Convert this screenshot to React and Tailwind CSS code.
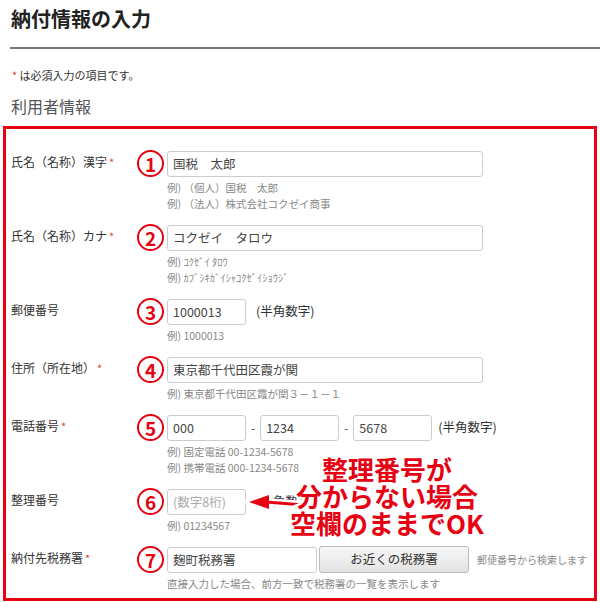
import React from 'react';

const RED = 'text-[#e60012]';

const Num = ({ n }) => (
    <div className="w-[27px] h-[27px] shrink-0 rounded-full border-2 border-[#e60012] flex items-center justify-center">
        <span className={`${RED} text-[19px] font-bold leading-none`}>{n}</span>
    </div>
);

const Box = ({ w, value, placeholder }) => (
    <input
        readOnly
        value={value || ''}
        placeholder={placeholder}
        className={`${w} h-[26px] border border-[#cccccc] rounded-[3px] bg-white px-[5px] text-[12.5px] text-[#444] placeholder:text-[#aaa] outline-none`}
    />
);

const Row = ({ label, req, n, help = [], children }) => (
    <div className="flex items-start mb-[12px]">
        <div className="w-[126px] pt-[4px] text-[12px] leading-[16px] text-[#333]">
            {label}
            {req && <span className="text-[#e8383d] ml-[2px] text-[11px]">*</span>}
        </div>
        <div className="flex flex-col">
            <div className="flex items-center">
                <Num n={n} />
                <div className="ml-[3px] flex items-center">{children}</div>
            </div>
            {help.length > 0 && (
                <div className="mt-[3px] ml-[30px] text-[10.5px] leading-[16px] text-[#888]">
                    {help.map((h) => (
                        <div key={h}>{h}</div>
                    ))}
                </div>
            )}
        </div>
    </div>
);

const Hankaku = ({ ml }) => (
    <span className={`${ml} text-[12.5px] text-[#333]`}>(半角数字)</span>
);

const Dash = () => <span className="mx-[5px] text-[12px] text-[#555]">-</span>;

export default function App() {
    return (
        <div className="relative w-[600px] h-[603px] overflow-hidden bg-white font-['Noto_Sans_CJK_JP','Noto_Sans',sans-serif]">
            <h1 className="pl-[11px] pt-[6px] text-[20px] font-bold leading-[26px] text-[#222]">
                納付情報の入力
            </h1>
            <div className="ml-[10px] mt-[15px] h-[2px] bg-[#777]" />
            <p className="pl-[12px] mt-[18px] text-[11px] leading-[16px] text-[#333]">
                <span className="text-[#e8383d]">*</span> は必須入力の項目です。
            </p>
            <h2 className="pl-[11px] mt-[13px] text-[16px] leading-[20px] text-[#555]">
                利用者情報
            </h2>

            <div className="ml-[3px] mt-[10px] w-[594px] h-[475px] border-[3px] border-[#e60012] pl-[5px] pt-[21px]">
                <Row
                    label="氏名（名称）漢字"
                    req
                    n="1"
                    help={['例) （個人）国税　太郎', '例) （法人）株式会社コクゼイ商事']}
                >
                    <Box w="w-[316px]" value="国税　太郎" />
                </Row>
                <Row
                    label="氏名（名称）カナ"
                    req
                    n="2"
                    help={['例) ｺｸｾﾞｲ ﾀﾛｳ', '例) ｶﾌﾞｼｷｶﾞｲｼｬｺｸｾﾞｲｼｮｳｼﾞ']}
                >
                    <Box w="w-[316px]" value="コクゼイ　タロウ" />
                </Row>
                <Row label="郵便番号" n="3" help={['例) 1000013']}>
                    <Box w="w-[79px]" value="1000013" />
                    <Hankaku ml="ml-[10px]" />
                </Row>
                <Row label="住所（所在地）" req n="4" help={['例) 東京都千代田区霞が関３－１－１']}>
                    <Box w="w-[316px]" value="東京都千代田区霞が関" />
                </Row>
                <Row
                    label="電話番号"
                    req
                    n="5"
                    help={['例) 固定電話 00-1234-5678', '例) 携帯電話 000-1234-5678']}
                >
                    <Box w="w-[79px]" value="000" />
                    <Dash />
                    <Box w="w-[79px]" value="1234" />
                    <Dash />
                    <Box w="w-[79px]" value="5678" />
                    <Hankaku ml="ml-[6px]" />
                </Row>
                <Row label="整理番号" n="6" help={['例) 01234567']}>
                    <Box w="w-[79px]" placeholder="(数字8桁)" />
                    <Hankaku ml="ml-[10px]" />
                </Row>
                <Row
                    label="納付先税務署"
                    req
                    n="7"
                    help={['直接入力した場合、前方一致で税務署の一覧を表示します']}
                >
                    <Box w="w-[150px]" value="麹町税務署" />
                    <button className="ml-[2px] w-[150px] h-[27px] rounded-[3px] border border-[#bbbbbb] bg-gradient-to-b from-[#f7f7f7] to-[#e3e3e3] text-[12.5px] text-[#333]">
                        お近くの税務署
                    </button>
                    <span className="ml-[8px] text-[10px] text-[#888]">郵便番号から検索します</span>
                </Row>
            </div>

            {/* annotation over the 整理番号 row */}
            <svg className="absolute left-[244px] top-[490px]" width="66" height="26" viewBox="0 0 66 26">
                <g stroke="#fff" strokeWidth="8" strokeLinejoin="round" fill="#fff">
                    <path d="M5 12 L25 5 L25 19 Z" />
                    <path d="M22 12 L60 15" />
                </g>
                <path d="M5 12 L25 5 L25 19 Z" fill="#e60012" />
                <path d="M22 12 L60 15" stroke="#e60012" strokeWidth="3" />
            </svg>
            <div className="absolute left-[280px] top-[455px] w-[214px] text-center text-[26px] font-bold leading-[27px] text-[#e60012] [-webkit-text-stroke:5px_#fff] [paint-order:stroke_fill]">
                <div>整理番号が</div>
                <div>分からない場合</div>
                <div>空欄のままでOK</div>
            </div>
        </div>
    );
}
